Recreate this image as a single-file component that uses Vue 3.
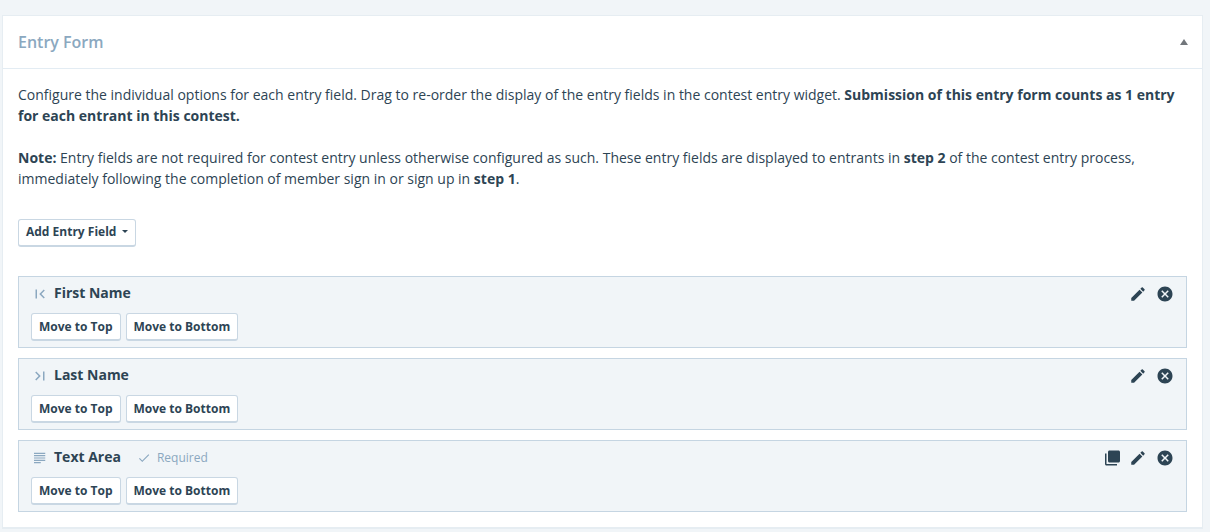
<script setup>
import { ref } from 'vue'

const open = ref(true)

const paths = {
  first: 'M18.41 16.59L13.82 12l4.59-4.59L17 6l-6 6 6 6zM6 6h2v12H6z',
  last: 'M5.59 7.41L10.18 12l-4.59 4.59L7 18l6-6-6-6zM16 6h2v12h-2z',
  area: 'M4 5h15v1.6H4zM4 8.1h15v1.6H4zM4 11.2h15v1.6H4zM4 14.3h15v1.6H4zM4 17.4h9v1.6H4z',
  check: 'M9 16.17L4.83 12l-1.42 1.41L9 19 21 7l-1.41-1.41z',
  copy: 'M6 6H4v14c0 1.1.9 2 2 2h14v-2H6V6zM22 2H10c-1.1 0-2 .9-2 2v12c0 1.1.9 2 2 2h12c1.1 0 2-.9 2-2V4c0-1.1-.9-2-2-2z',
  edit: 'M3 17.25V21h3.75L17.81 9.94l-3.75-3.75L3 17.25zM20.71 7.04c.39-.39.39-1.02 0-1.41l-2.34-2.34c-.39-.39-1.02-.39-1.41 0l-1.83 1.83 3.75 3.75 1.83-1.83z',
  remove: 'M12 2C6.47 2 2 6.47 2 12s4.47 10 10 10 10-4.47 10-10S17.53 2 12 2zm5 13.59L15.59 17 12 13.41 8.41 17 7 15.59 10.59 12 7 8.41 8.41 7 12 10.59 15.59 7 17 8.41 13.41 12 17 15.59z',
}

const labels = { copy: 'Duplicate', edit: 'Edit', remove: 'Remove' }

const fields = [
  { name: 'First Name', icon: 'first', required: false, actions: ['edit', 'remove'] },
  { name: 'Last Name', icon: 'last', required: false, actions: ['edit', 'remove'] },
  { name: 'Text Area', icon: 'area', required: true, actions: ['copy', 'edit', 'remove'] },
]
</script>

<template>
  <main class="page">
    <section class="card">
      <header class="head">
        <h2>Entry Form</h2>
        <button class="toggle" type="button" aria-label="Toggle panel" :aria-expanded="open" @click="open = !open">
          <svg width="8" height="6" viewBox="0 0 8 6"><path d="M4 0l4 6H0z" /></svg>
        </button>
      </header>
      <div v-if="open" class="body">
        <p>
          Configure the individual options for each entry field. Drag to re-order the display of the entry fields in the
          contest entry widget. <strong>Submission of this entry form counts as 1 entry for each entrant in this contest.</strong>
        </p>
        <p>
          <strong>Note:</strong> Entry fields are not required for contest entry unless otherwise configured as such. These
          entry fields are displayed to entrants in <strong>step 2</strong> of the contest entry process, immediately
          following the completion of member sign in or sign up in <strong>step 1</strong>.
        </p>
        <button class="btn add" type="button">
          Add Entry Field
          <svg width="6" height="3" viewBox="0 0 6 3"><path d="M0 0h6L3 3z" /></svg>
        </button>
        <ul class="fields">
          <li v-for="field in fields" :key="field.name" class="field">
            <div class="row">
              <svg class="kind" viewBox="0 0 24 24"><path :d="paths[field.icon]" /></svg>
              <h3>{{ field.name }}</h3>
              <span v-if="field.required" class="required">
                <svg viewBox="0 0 24 24"><path :d="paths.check" /></svg>
                Required
              </span>
              <div class="actions">
                <button v-for="action in field.actions" :key="action" class="action" type="button" :aria-label="`${labels[action]} ${field.name}`">
                  <svg viewBox="0 0 24 24"><path :d="paths[action]" /></svg>
                </button>
              </div>
            </div>
            <div class="moves">
              <button class="btn" type="button">Move to Top</button>
              <button class="btn" type="button">Move to Bottom</button>
            </div>
          </li>
        </ul>
      </div>
    </section>
  </main>
</template>

<style>
body {
  background: #f1f5f8;
}
</style>

<style scoped>
.page {
  padding: 15px 7px 4px 2px;
  color: #2d4454;
  font: 14px/21px "Open Sans", sans-serif;
}
.card {
  background: #fff;
  border: 1px solid #e6edf2;
  border-bottom-width: 2px;
}
svg {
  display: block;
  fill: currentColor;
}
.head {
  display: flex;
  align-items: center;
  justify-content: space-between;
  height: 52px;
  padding: 0 14px 0 15px;
  border-bottom: 1px solid #e3ecf3;
}
h2 {
  margin: 0;
  color: #8ba8c0;
  font-size: 16px;
  font-weight: 600;
}
.toggle {
  padding: 0;
  border: 0;
  background: none;
  color: #72777c;
}
.body {
  padding: 15px;
}
p {
  margin: 0 0 21px;
}
strong {
  font-weight: 700;
}
.btn {
  height: 28px;
  padding: 0 7px;
  border: 1px solid #c9d7e3;
  border-bottom-width: 2px;
  border-radius: 3px;
  background: #fff;
  color: #2d4454;
  font: 700 12px/20px "Open Sans", sans-serif;
}
.add {
  display: flex;
  align-items: center;
  gap: 6px;
  margin-top: 30px;
  padding-bottom: 2px;
}
.fields {
  display: grid;
  gap: 10px;
  margin: 29px 0 0;
  padding: 0;
  list-style: none;
}
.field {
  padding: 6px 12px;
  border: 1px solid #c5d5e2;
  background: #f1f5f8;
}
.row {
  display: flex;
  align-items: center;
  height: 21px;
  margin-bottom: 9px;
}
.kind {
  width: 18px;
  height: 18px;
  margin-right: 5px;
  color: #8ba8c0;
}
h3 {
  margin: 0;
  padding-bottom: 2px;
  font-size: 14px;
  font-weight: 700;
}
.required {
  display: flex;
  align-items: center;
  gap: 6px;
  margin-left: 16px;
  color: #8ba8c0;
  font-size: 12px;
}
.required svg {
  width: 14px;
  height: 14px;
}
.actions {
  display: flex;
  gap: 9px;
  margin-left: auto;
}
.action {
  padding: 0;
  border: 0;
  background: none;
  color: #2d4454;
}
.action svg {
  width: 18px;
  height: 18px;
}
.moves {
  display: flex;
  gap: 5px;
}
</style>
